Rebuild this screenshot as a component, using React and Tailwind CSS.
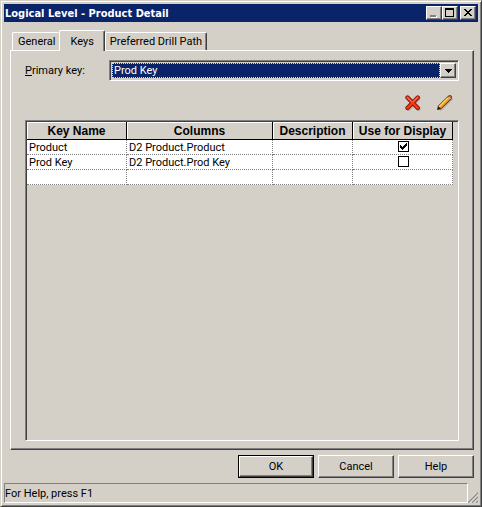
import React, { useState } from 'react';

const raised =
  'border border-t-white border-l-white border-r-[#404040] border-b-[#404040] shadow-[inset_-1px_-1px_0_#808080] bg-[#d4d0c8]';
const sunken =
  'border border-t-[#808080] border-l-[#808080] border-r-white border-b-white shadow-[inset_1px_1px_0_#404040]';

const tabs = ['General', 'Keys', 'Preferred Drill Path'];

const initialRows = [
  { name: 'Product', columns: 'D2 Product.Product', display: true },
  { name: 'Prod Key', columns: 'D2 Product.Prod Key', display: false },
];

function DeleteIcon() {
  return (
    <svg width="16" height="16" viewBox="0 0 16 16">
      <path d="M3.5 3.5 L13.5 14 M13.5 3.5 L3.5 14" stroke="#b4b0a8" strokeWidth="4" strokeLinecap="round" />
      <path d="M2.5 2.5 L12.8 13 M12.8 2.5 L2.5 13" stroke="#98120c" strokeWidth="4.4" strokeLinecap="round" />
      <path d="M2.5 2.5 L12.8 13 M12.8 2.5 L2.5 13" stroke="#f83c10" strokeWidth="2.4" strokeLinecap="round" />
      <path d="M2.2 2.4 L6.5 6.6 M12.4 2.2 L8.4 6.2" stroke="#ff8c60" strokeWidth="1" strokeLinecap="round" />
    </svg>
  );
}

function PencilIcon() {
  return (
    <svg width="16" height="16" viewBox="0 0 16 16">
      <path d="M3 15.5 L15.5 3.5" stroke="#b4b0a8" strokeWidth="2" />
      <path d="M0 15 L0.8 11 L11.5 0.5 L13.5 0 L15.2 1.8 L14.6 4 L4 14.2 Z" fill="#5c3206" />
      <path d="M1.8 11.4 L10.8 2.4 L13 4.3 L4 13.2 Z" fill="#f4a41c" />
      <path d="M2 11.7 L10.9 2.8" stroke="#ffe67e" strokeWidth="1.2" />
      <path d="M10.8 2.4 L11.8 1.4 L14 3.4 L13 4.4 Z" fill="#c4ccd8" />
      <path d="M11.8 1.4 L13.2 0.8 L14.5 2 L14 3.6 Z" fill="#e46434" />
      <path d="M0.8 14.4 L1.4 12.2 L3.2 13.8 Z" fill="#181008" />
    </svg>
  );
}

function CaptionButton({ label, children }) {
  return (
    <button aria-label={label} className={`${raised} flex h-[14px] w-4 items-center justify-center`}>
      <svg width="12" height="12" viewBox="0 0 12 12" shapeRendering="crispEdges" className="shrink-0">
        {children}
      </svg>
    </button>
  );
}

function TitleBar() {
  return (
    <header className="flex h-[18px] items-center bg-[#0a246a] pr-[2px] pl-px">
      <h1 className="flex-1 font-['DejaVu_Sans_Condensed','DejaVu_Sans',sans-serif] text-[11px] font-bold whitespace-nowrap text-white">
        Logical Level - Product Detail
      </h1>
      <CaptionButton label="Minimize">
        <path d="M3 9h6v2h-6z" fill="#fff" />
        <path d="M2 8h6v2h-6z" fill="#808080" />
      </CaptionButton>
      <CaptionButton label="Maximize">
        <path d="M1 1h9v9h-9z M2 3v6h7v-6z" fill="#000" fillRule="evenodd" />
      </CaptionButton>
      <span className="w-[2px]" />
      <CaptionButton label="Close">
        <path
          d="M2 2h2v1h1v1h2v-1h1v-1h2v1h-1v1h-1v1h-1v1h1v1h1v1h1v1h-2v-1h-1v-1h-2v1h-1v1h-2v-1h1v-1h1v-1h1v-1h-1v-1h-1v-1h-1z"
          fill="#000"
        />
      </CaptionButton>
    </header>
  );
}

function Tab({ label, active, onSelect }) {
  return (
    <button
      role="tab"
      aria-selected={active}
      onClick={onSelect}
      className={
        active
          ? 'z-10 -mb-px h-[21px] rounded-t-[2px] border border-b-0 border-t-white border-l-white border-r-[#404040] bg-[#d4d0c8] px-[10px] whitespace-nowrap shadow-[inset_-1px_0_0_#808080]'
          : 'h-[18px] rounded-t-[2px] border border-b-0 border-t-white border-l-white border-r-[#404040] bg-[#d4d0c8] px-1 pb-px whitespace-nowrap shadow-[inset_-1px_0_0_#808080] first:border-r-0 first:pl-[5px] first:shadow-none'
      }
    >
      {label}
    </button>
  );
}

function KeyTable({ rows, onToggle }) {
  const head = 'h-[18px] border-r border-b border-black p-0 text-center font-bold shadow-[inset_1px_1px_0_#fff]';
  const box = 'h-[15px] border-r border-b border-dotted border-[#808080] bg-white';
  const cell = `${box} pt-px pr-0 pb-0 pl-[2px] leading-[13px] whitespace-nowrap`;

  return (
    <table className="w-full table-fixed border-separate border-spacing-0">
      <colgroup>
        <col className="w-[100px]" />
        <col />
        <col className="w-20" />
        <col className="w-[100px]" />
      </colgroup>
      <thead>
        <tr className="font-['Liberation_Sans',Arial,sans-serif] text-xs leading-4">
          <th className={head}>Key Name</th>
          <th className={head}>Columns</th>
          <th className={head}>Description</th>
          <th className={head}>Use for Display</th>
        </tr>
      </thead>
      <tbody>
        {rows.map((row, i) => (
          <tr key={row.name}>
            <td className={cell}>{row.name}</td>
            <td className={cell}>{row.columns}</td>
            <td className={cell}></td>
            <td className={`${box} p-0 pl-[2px] align-top`}>
              <label className="grid h-[13px] place-items-center">
                <input
                  type="checkbox"
                  aria-label={`Use ${row.name} for display`}
                  checked={row.display}
                  onChange={() => onToggle(i)}
                  className="col-start-1 row-start-1 h-[11px] w-[11px] appearance-none border border-black bg-white"
                />
                {row.display && (
                  <svg
                    width="7"
                    height="7"
                    viewBox="0 0 7 7"
                    shapeRendering="crispEdges"
                    className="pointer-events-none col-start-1 row-start-1"
                  >
                    <path d="M0 2h1v1h1v1h1v-1h1v-1h1v-1h1v-1h1v3h-1v1h-1v1h-1v1h-1v1h-1v-1h-1v-1h-1z" />
                  </svg>
                )}
              </label>
            </td>
          </tr>
        ))}
        <tr>
          <td className={cell}></td>
          <td className={cell}></td>
          <td className={cell}></td>
          <td className={cell}></td>
        </tr>
      </tbody>
    </table>
  );
}

function App() {
  const [activeTab, setActiveTab] = useState('Keys');
  const [rows, setRows] = useState(initialRows);

  const toggle = (index) => {
    setRows(rows.map((row, i) => (i === index ? { ...row, display: !row.display } : row)));
  };

  return (
    <div className="flex min-h-screen flex-col border border-t-[#d4d0c8] border-r-[#404040] border-b-[#404040] border-l-[#d4d0c8] bg-[#d4d0c8] p-[3px] font-[Roboto,'Liberation_Sans',sans-serif] text-[11px] leading-[13px] text-black shadow-[inset_1px_1px_0_#fff,inset_-1px_-1px_0_#808080]">
      <TitleBar />

      <main className="flex flex-1 flex-col pt-2 pr-1 pl-[6px]">
        <div role="tablist" className="flex h-5 items-end pl-[2px]">
          {tabs.map((tab) => (
            <Tab key={tab} label={tab} active={tab === activeTab} onSelect={() => setActiveTab(tab)} />
          ))}
        </div>

        {/* Tab page */}
        <section className={`${raised} flex flex-1 flex-col px-[14px] pt-[9px] pb-2`}>
          <div className="flex items-center">
            <label htmlFor="primary-key" className="w-[84px]">
              <span className="underline">P</span>rimary key:
            </label>
            <div className={`${sunken} flex h-[21px] flex-1 p-[2px]`}>
              <select
                id="primary-key"
                defaultValue="Prod Key"
                className="min-w-0 flex-1 appearance-none border border-dotted border-[#f5db95] bg-[#0a246a] pl-px text-white outline-none"
              >
                <option>Product</option>
                <option>Prod Key</option>
              </select>
              <span className={`${raised} pointer-events-none flex w-4 items-center justify-center`}>
                <svg width="7" height="4" viewBox="0 0 7 4" shapeRendering="crispEdges">
                  <path d="M0 0h7v1h-1v1h-1v1h-1v1h-1v-1h-1v-1h-1v-1h-1z" />
                </svg>
              </span>
            </div>
          </div>

          <div className="mt-[14px] mb-[9px] flex justify-end gap-4 pr-[6px]">
            <button aria-label="Delete key">
              <DeleteIcon />
            </button>
            <button aria-label="Edit key">
              <PencilIcon />
            </button>
          </div>

          <div className={`${sunken} flex-1 pt-px pr-[5px] pl-px`}>
            <KeyTable rows={rows} onToggle={toggle} />
          </div>
        </section>

        <footer className="flex justify-end gap-1 pt-[5px] pb-[5px]">
          <button className="h-[23px] w-[76px] border border-black">
            <span className={`${raised} flex h-full items-center justify-center`}>OK</span>
          </button>
          <button className={`${raised} h-[23px] w-[76px]`}>Cancel</button>
          <button className={`${raised} h-[23px] w-[76px]`}>Help</button>
        </footer>
      </main>

      <div className="flex items-end">
        <p className="h-5 flex-1 border border-t-[#808080] border-r-white border-b-white border-l-[#808080] pt-[3px]">
          For Help, press F1
        </p>
        <svg width="10" height="12" viewBox="0 0 10 12" className="shrink-0">
          <path d="M0 11.5L10 1.5M4 11.5L10 5.5M8 11.5L10 9.5" stroke="#808080" strokeWidth="1.4" />
          <path d="M0 10.5L9 1.5M3 11.5L10 4.5M7 11.5L10 8.5" stroke="#fff" strokeWidth="0.6" />
        </svg>
      </div>
    </div>
  );
}

export default App;
